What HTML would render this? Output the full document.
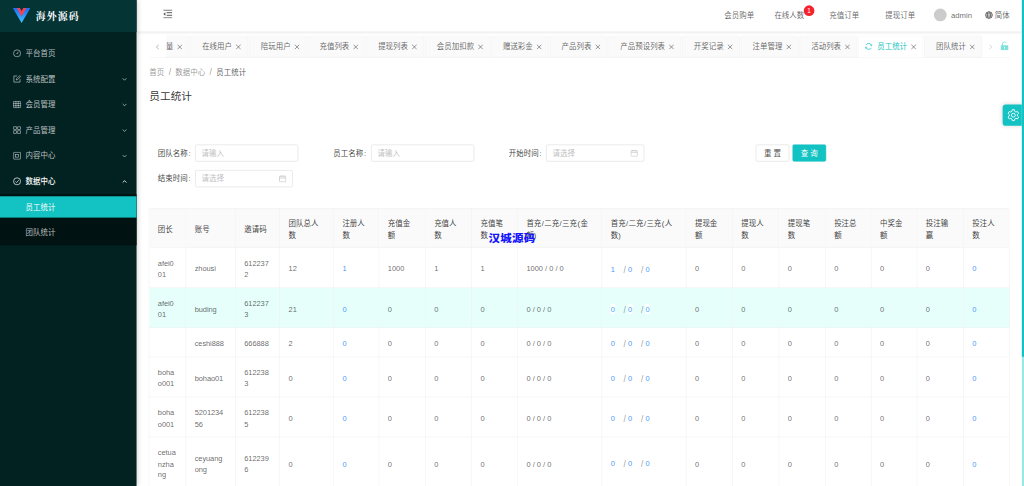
<!DOCTYPE html>
<html lang="zh-CN">
<head>
<meta charset="utf-8">
<title>员工统计</title>
<style>
*{box-sizing:border-box;margin:0;padding:0}
html,body{width:1024px;height:486px;overflow:hidden;background:#fff}
body{font-family:"Liberation Sans","Noto Sans CJK SC",sans-serif;font-size:14px;color:rgba(0,0,0,.65)}
#app{position:absolute;left:0;top:0;width:1920px;height:912px;transform:scale(.533333);transform-origin:0 0;overflow:hidden;background:#fff}
a{color:#4c9bf5;text-decoration:none}
svg{display:block}

/* sidebar */
#side{position:absolute;left:0;top:0;width:256px;height:912px;background:#022121;box-shadow:2px 0 8px rgba(29,35,41,.18);z-index:30}
#logo{position:absolute;left:0;top:0;width:256px;height:60px;background:#043434}
#logo svg{position:absolute;left:24px;top:15px}
#logo .t{position:absolute;left:67px;top:15px;font-family:"Liberation Serif","Noto Serif CJK SC",serif;font-weight:700;font-size:18.5px;line-height:32px;color:#fff;white-space:nowrap;letter-spacing:2.1px}
.mi{position:absolute;left:0;width:256px;height:40px;line-height:40px;color:rgba(255,255,255,.72);font-size:14px;white-space:nowrap}
.mi .ic{position:absolute;left:24px;top:12px;width:16px;height:16px}
.mi .tx{position:absolute;left:48px;top:0}
.mi .ar{position:absolute;left:228.5px;top:16.5px;width:9px;height:7.2px}
.mi.open{color:#fff}
.mi.open .tx{font-weight:500}
#sub{position:absolute;left:0;top:364px;width:256px;height:96px;background:#011212}
.mi.act{background:#13c2c2;color:#fff}

/* header */
#head{position:absolute;left:256px;top:0;width:1658px;height:60px;background:#fff;border-bottom:1px solid #eee;z-index:20}
#headsh{position:absolute;left:256px;top:60px;width:1658px;height:7px;background:linear-gradient(rgba(0,0,0,.07),rgba(0,0,0,.02) 45%,rgba(0,0,0,0));z-index:19}
.hx{position:absolute;top:17px;height:22px;line-height:22px;font-size:14px;color:rgba(0,0,0,.62);white-space:nowrap}

/* tabs */
#tabs{position:absolute;left:280px;top:67px;width:1613px;height:41px;border-bottom:1px solid #f0f0f0}
#tabnav{position:absolute;left:32px;top:0;width:1533px;height:41px;overflow:hidden}
#tabrow{position:absolute;left:-65px;top:0;height:41px;white-space:nowrap;display:flex}
.tab{position:relative;flex:none;height:41px;margin-right:2px;padding:0 0 0 21px;background:#fafafa;border:1px solid #f0f0f0;border-radius:3px 3px 0 0;font-size:14px;line-height:39px;color:rgba(0,0,0,.62)}
.tab .x{display:inline-block;width:10px;height:10px;margin-left:7px;margin-right:12px;vertical-align:-1px}
.tab.on{background:#fff;border-bottom-color:#fff;color:#13c2c2;padding-left:12px}
.tab.on .rf{display:inline-block;width:14px;height:14px;margin-right:9px;vertical-align:-2px}

/* content */
#bc{position:absolute;left:280px;top:124px;height:22px;line-height:22px;font-size:14px;white-space:nowrap;color:rgba(0,0,0,.45)}
#bc .s{margin:0 8.2px;font-size:16px}
#bc .c{color:rgba(0,0,0,.68)}
#ttl{position:absolute;left:280px;top:165px;height:32px;line-height:32px;font-size:20px;color:rgba(0,0,0,.82);white-space:nowrap}
.fl{position:absolute;height:32px;line-height:32px;font-size:14px;color:rgba(0,0,0,.78);white-space:nowrap}
.fl i{font-style:normal;margin-left:1.6px}
.inp{position:absolute;height:32px;border:1px solid #d9d9d9;border-radius:3px;background:#fff}
.inp .ph{position:absolute;left:11px;top:0;line-height:30px;color:#bfbfbf;font-size:14px;white-space:nowrap}
.inp .cal{position:absolute;right:11px;top:8px;width:14px;height:14px}
.btn{position:absolute;width:63px;height:32px;line-height:30px;text-align:center;border:1px solid #d9d9d9;border-radius:3px;background:#fff;font-size:14px;color:rgba(0,0,0,.72);white-space:nowrap}
.btn.pri{background:#13c2c2;border-color:#13c2c2;color:#fff}
#tb{position:absolute;left:279px;top:390.2px;width:1613px;table-layout:fixed;border-collapse:separate;border-spacing:0;border-left:1px solid #f0f0f0;font-size:14px;line-height:20.7px}
#tb th,#tb td{padding:18.85px 16px 13.85px;text-align:left;vertical-align:middle;border-right:1px solid #f0f0f0;border-bottom:1px solid #f0f0f0;white-space:nowrap;overflow:hidden;font-weight:400}
#tb th{background:#fafafa;color:rgba(0,0,0,.78);border-top:1px solid #f0f0f0;line-height:22px;padding-top:17.1px;padding-bottom:12px}

#tb th:first-child{border-top-left-radius:3px}
#tb th:last-child{border-top-right-radius:3px}
#tb td{color:rgba(0,0,0,.62)}
#tb tr.hl td{background:#e6fffb}
#tb a.k{background:#fff;padding:1.5px 0 1px}
#tb .sl{margin-left:16.5px;margin-right:4.1px;font-size:15.5px;line-height:14px;color:rgba(0,0,0,.45);position:relative;top:1.6px}
#tb th i{font-style:normal;padding:0 .8px}
#tb td:nth-child(-n+3){letter-spacing:-.15px}
#wm{position:absolute;left:916px;top:435px;transform:scale(1.0,.86);transform-origin:0 0;font-family:"Liberation Sans","Noto Sans CJK SC",sans-serif;font-weight:900;font-size:21.5px;line-height:28px;color:#1414ff;white-space:nowrap;z-index:5;letter-spacing:.5px}
</style>
</head>
<body>
<div id="app">

<!-- SIDEBAR -->
<div id="side">
  <div id="logo">
    <svg width="33" height="28" viewBox="0 0 33 28"><defs><linearGradient id="lg" x1="0" y1="0" x2="0" y2="1"><stop offset="0" stop-color="#1b6cf2"/><stop offset="1" stop-color="#3fc4ff"/></linearGradient></defs><path d="M0 0H33L16.5 28Z" fill="url(#lg)"/><path d="M7.5 0H25.5L16.5 16Z" fill="#f04358"/><path d="M13.5 0H19.5L16.5 5.4Z" fill="#043434"/></svg>
    <div class="t">海外源码</div>
  </div>
  <div id="sub"></div>
  <div class="mi" style="top:80px"><svg class="ic" viewBox="0 0 16 16" fill="none" stroke="currentColor" stroke-width="1.3"><circle cx="8" cy="8" r="6.6"/><path d="M8 8.6L10.2 5.6" stroke-linecap="round"/><circle cx="8" cy="8.8" r=".9" fill="currentColor" stroke="none"/></svg><span class="tx">平台首页</span></div>
  <div class="mi" style="top:128px"><svg class="ic" viewBox="0 0 16 16" fill="none" stroke="currentColor" stroke-width="1.3"><path d="M13.6 8.4V14H2V2.4H8.2"/><path d="M6.4 10L7 7.6L12.8 1.8L14.6 3.6L8.8 9.4Z" stroke-linejoin="round"/></svg><span class="tx">系统配置</span><svg class="ar" viewBox="0 0 10 8" fill="none" stroke="currentColor" stroke-width="1.6"><path d="M1 2L5 6L9 2"/></svg></div>
  <div class="mi" style="top:176px"><svg class="ic" viewBox="0 0 16 16" fill="none" stroke="currentColor" stroke-width="1.2"><rect x="1.2" y="2.2" width="13.6" height="11.6" rx=".6"/><path d="M1.2 6H14.8M1.2 10H14.8M5.8 2.2V13.8M10.2 2.2V13.8"/></svg><span class="tx">会员管理</span><svg class="ar" viewBox="0 0 10 8" fill="none" stroke="currentColor" stroke-width="1.6"><path d="M1 2L5 6L9 2"/></svg></div>
  <div class="mi" style="top:224px"><svg class="ic" viewBox="0 0 16 16" fill="none" stroke="currentColor" stroke-width="1.2"><rect x="1.8" y="1.8" width="5" height="5"/><rect x="9.2" y="1.8" width="5" height="5"/><rect x="1.8" y="9.2" width="5" height="5"/><rect x="9.2" y="9.2" width="5" height="5"/></svg><span class="tx">产品管理</span><svg class="ar" viewBox="0 0 10 8" fill="none" stroke="currentColor" stroke-width="1.6"><path d="M1 2L5 6L9 2"/></svg></div>
  <div class="mi" style="top:272px"><svg class="ic" viewBox="0 0 16 16" fill="none" stroke="currentColor" stroke-width="1.2"><rect x="1.6" y="1.6" width="12.8" height="12.8" rx=".6"/><rect x="5.4" y="5.4" width="5.2" height="5.2"/></svg><span class="tx">内容中心</span><svg class="ar" viewBox="0 0 10 8" fill="none" stroke="currentColor" stroke-width="1.6"><path d="M1 2L5 6L9 2"/></svg></div>
  <div class="mi open" style="top:320px"><svg class="ic" viewBox="0 0 16 16" fill="none" stroke="currentColor" stroke-width="1.3"><circle cx="8" cy="8" r="6.6"/><path d="M5 8.2L7.2 10.4L11.2 5.8"/></svg><span class="tx">数据中心</span><svg class="ar" viewBox="0 0 10 8" fill="none" stroke="currentColor" stroke-width="1.8"><path d="M1 6L5 2L9 6"/></svg></div>
  <div class="mi act" style="top:368px"><span class="tx">员工统计</span></div>
  <div class="mi" style="top:416px"><span class="tx">团队统计</span></div>
</div>

<!-- HEADER -->
<div id="head">
  <svg style="position:absolute;left:49.5px;top:17.5px" width="17.5" height="16.5" viewBox="0 0 18 17" fill="#5a5a5a"><rect x="0" y="0" width="18" height="1.9"/><rect x="6.6" y="5" width="11.4" height="1.9"/><rect x="6.6" y="10" width="11.4" height="1.9"/><rect x="0" y="15.1" width="18" height="1.9"/><path d="M4.2 5V12L0 8.5Z"/></svg>
  <span class="hx" style="left:1102px">会员购单</span>
  <span class="hx" style="left:1196px">在线人数</span>
  <span style="position:absolute;left:1251px;top:10px;width:20px;height:20px;border-radius:10px;background:#f5222d;color:#fff;font-size:12px;line-height:20px;text-align:center;font-weight:400">1</span>
  <span class="hx" style="left:1299px">充值订单</span>
  <span class="hx" style="left:1404px">提现订单</span>
  <span style="position:absolute;left:1495px;top:16px;width:24px;height:24px;border-radius:12px;background:#ccc"></span>
  <span class="hx" style="left:1527px;font-size:14.5px">admin</span>
  <svg style="position:absolute;left:1591px;top:20.5px" width="14.5" height="14.5" viewBox="0 0 14 14" fill="none" stroke="#444" stroke-width="1.2"><circle cx="7" cy="7" r="6.2"/><ellipse cx="7" cy="7" rx="2.8" ry="6.2"/><path d="M.8 7H13.2M1.8 3.6H12.2M1.8 10.4H12.2"/></svg>
  <span class="hx" style="left:1609px">简体</span>
</div>
<div id="headsh"></div>

<!-- TABS -->
<div id="tabs">
  <svg style="position:absolute;left:12px;top:16px" width="7" height="10" viewBox="0 0 7 10" fill="none" stroke="#999" stroke-width="1.3"><path d="M6 .6L1.2 5L6 9.4"/></svg>
  <div id="tabnav"><div id="tabrow">
    <div class="tab">会员数量<svg class="x" viewBox="0 0 9 9" stroke="#666" stroke-width="1.15"><path d="M.5 .5L8.5 8.5M8.5 .5L.5 8.5"/></svg></div>
    <div class="tab">在线用户<svg class="x" viewBox="0 0 9 9" stroke="#666" stroke-width="1.15"><path d="M.5 .5L8.5 8.5M8.5 .5L.5 8.5"/></svg></div>
    <div class="tab">陪玩用户<svg class="x" viewBox="0 0 9 9" stroke="#666" stroke-width="1.15"><path d="M.5 .5L8.5 8.5M8.5 .5L.5 8.5"/></svg></div>
    <div class="tab">充值列表<svg class="x" viewBox="0 0 9 9" stroke="#666" stroke-width="1.15"><path d="M.5 .5L8.5 8.5M8.5 .5L.5 8.5"/></svg></div>
    <div class="tab">提现列表<svg class="x" viewBox="0 0 9 9" stroke="#666" stroke-width="1.15"><path d="M.5 .5L8.5 8.5M8.5 .5L.5 8.5"/></svg></div>
    <div class="tab">会员加扣款<svg class="x" viewBox="0 0 9 9" stroke="#666" stroke-width="1.15"><path d="M.5 .5L8.5 8.5M8.5 .5L.5 8.5"/></svg></div>
    <div class="tab">赠送彩金<svg class="x" viewBox="0 0 9 9" stroke="#666" stroke-width="1.15"><path d="M.5 .5L8.5 8.5M8.5 .5L.5 8.5"/></svg></div>
    <div class="tab">产品列表<svg class="x" viewBox="0 0 9 9" stroke="#666" stroke-width="1.15"><path d="M.5 .5L8.5 8.5M8.5 .5L.5 8.5"/></svg></div>
    <div class="tab">产品预设列表<svg class="x" viewBox="0 0 9 9" stroke="#666" stroke-width="1.15"><path d="M.5 .5L8.5 8.5M8.5 .5L.5 8.5"/></svg></div>
    <div class="tab">开奖记录<svg class="x" viewBox="0 0 9 9" stroke="#666" stroke-width="1.15"><path d="M.5 .5L8.5 8.5M8.5 .5L.5 8.5"/></svg></div>
    <div class="tab">注单管理<svg class="x" viewBox="0 0 9 9" stroke="#666" stroke-width="1.15"><path d="M.5 .5L8.5 8.5M8.5 .5L.5 8.5"/></svg></div>
    <div class="tab">活动列表<svg class="x" viewBox="0 0 9 9" stroke="#666" stroke-width="1.15"><path d="M.5 .5L8.5 8.5M8.5 .5L.5 8.5"/></svg></div>
    <div class="tab on"><svg class="rf" viewBox="0 0 14 14" fill="none" stroke="#13c2c2" stroke-width="1.3"><path d="M12.3 5.2A5.6 5.6 0 0 0 2 4.4M1.7 8.8A5.6 5.6 0 0 0 12 9.6"/><path d="M12.9 2.6V5.6H9.9M1.1 11.4V8.4H4.1" stroke-width="1.1"/></svg>员工统计<svg class="x" viewBox="0 0 9 9" stroke="#666" stroke-width="1.15"><path d="M.5 .5L8.5 8.5M8.5 .5L.5 8.5"/></svg></div>
    <div class="tab">团队统计<svg class="x" viewBox="0 0 9 9" stroke="#666" stroke-width="1.15"><path d="M.5 .5L8.5 8.5M8.5 .5L.5 8.5"/></svg></div>
  </div></div>
  <svg style="position:absolute;left:1574px;top:16px" width="7" height="10" viewBox="0 0 7 10" fill="none" stroke="#c4c4c4" stroke-width="1.2"><path d="M1 .6L5.8 5L1 9.4"/></svg>
  <svg style="position:absolute;left:1596px;top:11px" width="15" height="16" viewBox="0 0 15 16"><path d="M3.6 7V4.2A3.6 3.6 0 0 1 10.6 3" fill="none" stroke="#7fe0dc" stroke-width="1.8"/><rect x="0" y="7" width="15" height="9" rx="1" fill="#7fe0dc"/><rect x="6.6" y="10" width="1.8" height="3" fill="#fff"/></svg>
</div>


<!-- BREADCRUMB + TITLE -->
<div id="bc"><span class="l">首页</span><span class="s">/</span><span class="l">数据中心</span><span class="s">/</span><span class="c">员工统计</span></div>
<div id="ttl">员工统计</div>

<!-- FORM -->
<div class="fl" style="left:296px;top:271px">团队名称<i>:</i></div>
<div class="inp" style="left:366px;top:271px;width:193px"><span class="ph">请输入</span></div>
<div class="fl" style="left:625px;top:271px">员工名称<i>:</i></div>
<div class="inp" style="left:696px;top:271px;width:193px"><span class="ph">请输入</span></div>
<div class="fl" style="left:954px;top:271px">开始时间<i>:</i></div>
<div class="inp" style="left:1024px;top:271px;width:184px"><span class="ph">请选择</span><svg class="cal" viewBox="0 0 14 14" fill="none" stroke="#bfbfbf" stroke-width="1.2"><rect x="1" y="2.4" width="12" height="10.6" rx="1"/><path d="M1 5.6H13M4.2 .8V3.6M9.8 .8V3.6"/></svg></div>
<div class="fl" style="left:296px;top:319px">结束时间<i>:</i></div>
<div class="inp" style="left:366px;top:319px;width:183px"><span class="ph">请选择</span><svg class="cal" viewBox="0 0 14 14" fill="none" stroke="#bfbfbf" stroke-width="1.2"><rect x="1" y="2.4" width="12" height="10.6" rx="1"/><path d="M1 5.6H13M4.2 .8V3.6M9.8 .8V3.6"/></svg></div>
<div class="btn" style="left:1417px;top:271px">重 置</div>
<div class="btn pri" style="left:1486px;top:271px">查 询</div>

<!-- TABLE -->
<table id="tb" cellspacing="0" cellpadding="0">
<colgroup><col style="width:69px"><col style="width:93px"><col style="width:83px"><col style="width:101px"><col style="width:85px"><col style="width:87px"><col style="width:87px"><col style="width:86px"><col style="width:158px"><col style="width:158px"><col style="width:87px"><col style="width:87px"><col style="width:87px"><col style="width:86px"><col style="width:86px"><col style="width:87px"><col style="width:86px"></colgroup>
<thead><tr>
<th>团长</th><th>账号</th><th>邀请码</th><th>团队总人<br>数</th><th>注册人<br>数</th><th>充值金<br>额</th><th>充值人<br>数</th><th>充值笔<br>数</th><th>首充<i>/</i>二充<i>/</i>三充<i>(</i>金<br>额)</th><th>首充<i>/</i>二充<i>/</i>三充<i>(</i>人<br>数)</th><th>提现金<br>额</th><th>提现人<br>数</th><th>提现笔<br>数</th><th>投注总<br>额</th><th>中奖金<br>额</th><th>投注输<br>赢</th><th>投注人<br>数</th>
</tr></thead>
<tbody>
<tr><td>afei0<br>01</td><td>zhousi</td><td>612237<br>2</td><td>12</td><td><a>1</a></td><td>1000</td><td>1</td><td>1</td><td>1000 / 0 / 0</td><td><a class="k">1</a><span class="sl">/</span><a class="k">0</a><span class="sl">/</span><a class="k">0</a></td><td>0</td><td>0</td><td>0</td><td>0</td><td>0</td><td>0</td><td><a>0</a></td></tr>
<tr class="hl"><td>afei0<br>01</td><td>buding</td><td>612237<br>3</td><td>21</td><td><a>0</a></td><td>0</td><td>0</td><td>0</td><td>0 / 0 / 0</td><td><a class="k">0</a><span class="sl">/</span><a class="k">0</a><span class="sl">/</span><a class="k">0</a></td><td>0</td><td>0</td><td>0</td><td>0</td><td>0</td><td>0</td><td><a>0</a></td></tr>
<tr><td></td><td>ceshi888</td><td>666888</td><td>2</td><td><a>0</a></td><td>0</td><td>0</td><td>0</td><td>0 / 0 / 0</td><td><a class="k">0</a><span class="sl">/</span><a class="k">0</a><span class="sl">/</span><a class="k">0</a></td><td>0</td><td>0</td><td>0</td><td>0</td><td>0</td><td>0</td><td><a>0</a></td></tr>
<tr><td>boha<br>o001</td><td>bohao01</td><td>612238<br>3</td><td>0</td><td><a>0</a></td><td>0</td><td>0</td><td>0</td><td>0 / 0 / 0</td><td><a class="k">0</a><span class="sl">/</span><a class="k">0</a><span class="sl">/</span><a class="k">0</a></td><td>0</td><td>0</td><td>0</td><td>0</td><td>0</td><td>0</td><td><a>0</a></td></tr>
<tr><td>boha<br>o001</td><td>5201234<br>56</td><td>612238<br>5</td><td>0</td><td><a>0</a></td><td>0</td><td>0</td><td>0</td><td>0 / 0 / 0</td><td><a class="k">0</a><span class="sl">/</span><a class="k">0</a><span class="sl">/</span><a class="k">0</a></td><td>0</td><td>0</td><td>0</td><td>0</td><td>0</td><td>0</td><td><a>0</a></td></tr>
<tr><td>cetua<br>nzha<br>ng</td><td>ceyuang<br>ong</td><td>612239<br>6</td><td>0</td><td><a>0</a></td><td>0</td><td>0</td><td>0</td><td>0 / 0 / 0</td><td><a class="k">0</a><span class="sl">/</span><a class="k">0</a><span class="sl">/</span><a class="k">0</a></td><td>0</td><td>0</td><td>0</td><td>0</td><td>0</td><td>0</td><td><a>0</a></td></tr>
</tbody></table>
<div id="wm">汉城源码</div>

<!-- SCROLLBAR -->
<div style="position:absolute;left:1915.5px;top:0;width:4.5px;height:912px;background:#9ae8e3;z-index:40"></div>
<div style="position:absolute;left:1915.5px;top:0;width:4.5px;height:669px;background:#13c2c2;z-index:41"></div>
<!-- SETTINGS BTN -->
<div style="position:absolute;left:1880px;top:196px;width:36px;height:40px;background:#13c2c2;border-radius:6px 0 0 6px;z-index:39;box-shadow:0 0 8px rgba(0,0,0,.15)">
  <svg style="position:absolute;left:8px;top:8px" width="24" height="24" viewBox="0 0 22 22" fill="none" stroke="#fff" stroke-width="1.55" stroke-linejoin="round"><path d="M13.4 4.4L12.8 1.6L9.2 1.6L8.6 4.4L6.5 5.6L3.8 4.7L1.9 7.9L4.1 9.8L4.1 12.2L1.9 14.1L3.8 17.3L6.5 16.4L8.6 17.6L9.2 20.4L12.8 20.4L13.4 17.6L15.5 16.4L18.2 17.3L20.1 14.1L17.9 12.2L17.9 9.8L20.1 7.9L18.2 4.7L15.5 5.6Z"/><circle cx="11" cy="11" r="3.3"/></svg>
</div>

</div>
</body>
</html>
